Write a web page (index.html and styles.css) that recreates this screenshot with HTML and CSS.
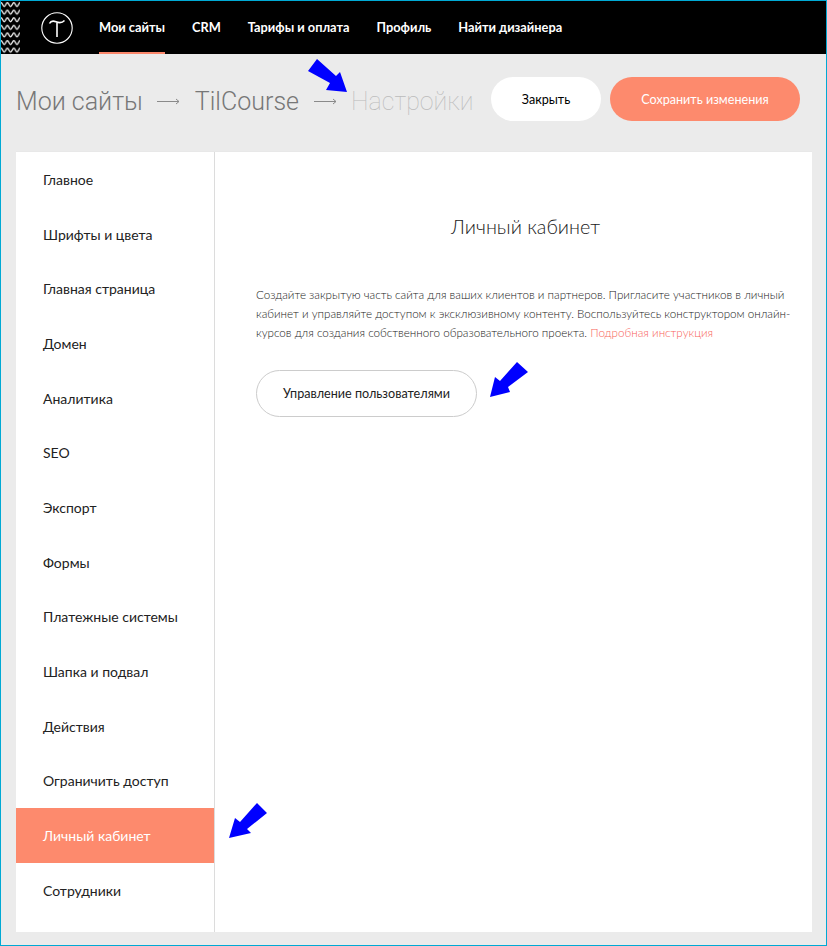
FILE: index.html
```html
<!DOCTYPE html>
<html lang="ru">
<head>
    <meta charset="UTF-8">
    <meta name="viewport" content="width=device-width, initial-scale=1.0">
    <title>Настройки сайта</title>
    <link rel="stylesheet" href="styles.css">
</head>
<body>
    <header class="topbar">
        <svg class="stripes" width="19" height="53" aria-hidden="true">
            <defs>
                <pattern id="wave" width="6.4" height="7.6" patternUnits="userSpaceOnUse">
                    <path d="M0 1.5 C1.2 1.5 2 5.5 3.2 5.5 C4.4 5.5 5.2 1.5 6.4 1.5" fill="none" stroke="#fff" stroke-width="1.3"/>
                </pattern>
            </defs>
            <rect width="19" height="53" fill="url(#wave)"/>
        </svg>
        <svg class="logo" width="32" height="32" viewBox="0 0 32 32" aria-hidden="true">
            <circle cx="16" cy="16" r="15.2" fill="none" stroke="#fff" stroke-width="1.1"/>
            <path d="M8.5 11.5 C10 8.5 12.5 8.8 15 9.8 C17.5 10.8 21 11.2 23.5 8.5" fill="none" stroke="#fff" stroke-width="1.6"/>
            <path d="M16 10.5 V25" fill="none" stroke="#fff" stroke-width="1.6"/>
        </svg>
        <nav class="topnav">
            <a class="topnav-item active" href="#">Мои сайты</a>
            <a class="topnav-item" href="#">CRM</a>
            <a class="topnav-item" href="#">Тарифы и оплата</a>
            <a class="topnav-item" href="#">Профиль</a>
            <a class="topnav-item" href="#">Найти дизайнера</a>
        </nav>
    </header>

    <div class="titlebar">
        <div class="crumbs">
            <span class="crumb">Мои сайты</span>
            <svg class="crumb-arrow" width="23" height="9" viewBox="0 0 23 9" aria-hidden="true"><path d="M0 4.5 H22 M19 2 L22 4.5 L19 7" fill="none" stroke="#8a8a8a" stroke-width="1"/></svg>
            <span class="crumb">TilCourse</span>
            <svg class="crumb-arrow" width="23" height="9" viewBox="0 0 23 9" aria-hidden="true"><path d="M0 4.5 H22 M19 2 L22 4.5 L19 7" fill="none" stroke="#8a8a8a" stroke-width="1"/></svg>
            <span class="crumb crumb-current">Настройки</span>
        </div>
        <a class="btn btn-close" href="#">Закрыть</a>
        <a class="btn btn-save" href="#">Сохранить изменения</a>
    </div>

    <main class="panel">
        <aside class="sidebar">
            <a class="side-item" href="#">Главное</a>
            <a class="side-item" href="#">Шрифты и цвета</a>
            <a class="side-item" href="#">Главная страница</a>
            <a class="side-item" href="#">Домен</a>
            <a class="side-item" href="#">Аналитика</a>
            <a class="side-item" href="#">SEO</a>
            <a class="side-item" href="#">Экспорт</a>
            <a class="side-item" href="#">Формы</a>
            <a class="side-item" href="#">Платежные системы</a>
            <a class="side-item" href="#">Шапка и подвал</a>
            <a class="side-item" href="#">Действия</a>
            <a class="side-item" href="#">Ограничить доступ</a>
            <a class="side-item active" href="#">Личный кабинет</a>
            <a class="side-item" href="#">Сотрудники</a>
        </aside>
        <section class="content">
            <h1>Личный кабинет</h1>
            <p>Создайте закрытую часть сайта для ваших клиентов и партнеров. Пригласите участников в личный<br>кабинет и управляйте доступом к эксклюзивному контенту. Воспользуйтесь конструктором онлайн-<br>курсов для создания собственного образовательного проекта. <a href="#">Подробная инструкция</a></p>
            <a class="btn-users" href="#">Управление пользователями</a>
        </section>
    </main>

    <!-- blue arrows drawn over the screenshot -->
    <svg class="marks" width="827" height="946" aria-hidden="true">
        <polygon points="317,59 336,76 340,72 347,92 326,90 330,83 308,71" fill="#0000ff"/>
        <polygon points="517,362 528,372 508,387 510,392 490,397 495,377 500,381" fill="#0000ff"/>
        <polygon points="257,803 267,813 247,829 251,833 229,838 235,818 240,822" fill="#0000ff"/>
    </svg>
</body>
</html>
```

FILE: styles.css
```css
* {
    box-sizing: border-box;
}

body {
    margin: 0;
    height: 946px;
    border: 1px solid #00a9d4;
    background: #ebebeb;
    color: #000;
    font-family: Lato, "Noto Sans", Arial, sans-serif;
    position: relative;
    overflow: hidden;
}

a {
    color: inherit;
    text-decoration: none;
}

.topbar {
    height: 53px;
    background: #000;
    display: flex;
    align-items: center;
}

.stripes {
    flex: none;
}

.logo {
    flex: none;
    margin-left: 21px;
}

.topnav {
    display: flex;
    align-self: stretch;
    gap: 27px;
    margin-left: 26px;
}

.topnav-item {
    display: flex;
    align-items: center;
    color: #fff;
    font-size: 12.8px;
    font-weight: 700;
    border-bottom: 2px solid transparent;
}

.topnav-item.active {
    border-bottom-color: #fa876b;
}

.titlebar {
    height: 98px;
    padding: 23px 26px 0 15px;
    display: flex;
    align-items: flex-start;
}

.crumbs {
    display: flex;
    align-items: center;
    gap: 14.5px;
    flex: 1;
    height: 44px;
    padding-top: 4px;
    font-size: 25px;
    font-family: Roboto, Arial, sans-serif;
    font-weight: 300;
    color: #777;
}

.crumb-current {
    color: #bbb;
    font-weight: 100;
}

.btn {
    height: 44px;
    border-radius: 22px;
    display: flex;
    align-items: center;
    justify-content: center;
    font-size: 12.6px;
}

.btn-close {
    width: 110px;
    background: #fff;
}

.btn-save {
    width: 190px;
    margin-left: 9px;
    background: #fd8a6d;
    color: #fff;
}

.panel {
    height: 780px;
    margin: 0 14px 0 15px;
    background: #fff;
    box-shadow: 0 -1px 0 #e8e8e8;
    display: flex;
}

.sidebar {
    width: 199px;
    flex: none;
    padding-top: 0.4px;
    border-right: 1px solid #dcdcdc;
    display: flex;
    flex-direction: column;
}

.side-item {
    height: 54.65px;
    flex: none;
    padding-left: 27px;
    display: flex;
    align-items: center;
    font-size: 14px;
    color: #222;
}

.side-item.active {
    background: #fd8a6d;
    color: #fff;
}

.content {
    flex: 1;
    min-width: 0;
    padding: 0 17px 0 41px;
}

.content h1 {
    margin: 60px 0 0;
    text-align: center;
    font-size: 19.8px;
    font-weight: 300;
    line-height: 28px;
    color: #222;
}

.content p {
    margin: 45px 0 0;
    font-size: 11.65px;
    font-weight: 300;
    line-height: 19px;
    color: #222;
    white-space: nowrap;
}

.content p a {
    color: #f8645a;
}

.btn-users {
    margin-top: 28px;
    width: 221px;
    height: 47px;
    border: 1px solid #ccc;
    border-radius: 24px;
    display: flex;
    align-items: center;
    justify-content: center;
    font-size: 12.6px;
    color: #222;
}

.marks {
    position: absolute;
    left: -1px;
    top: -1px;
    pointer-events: none;
}
```
